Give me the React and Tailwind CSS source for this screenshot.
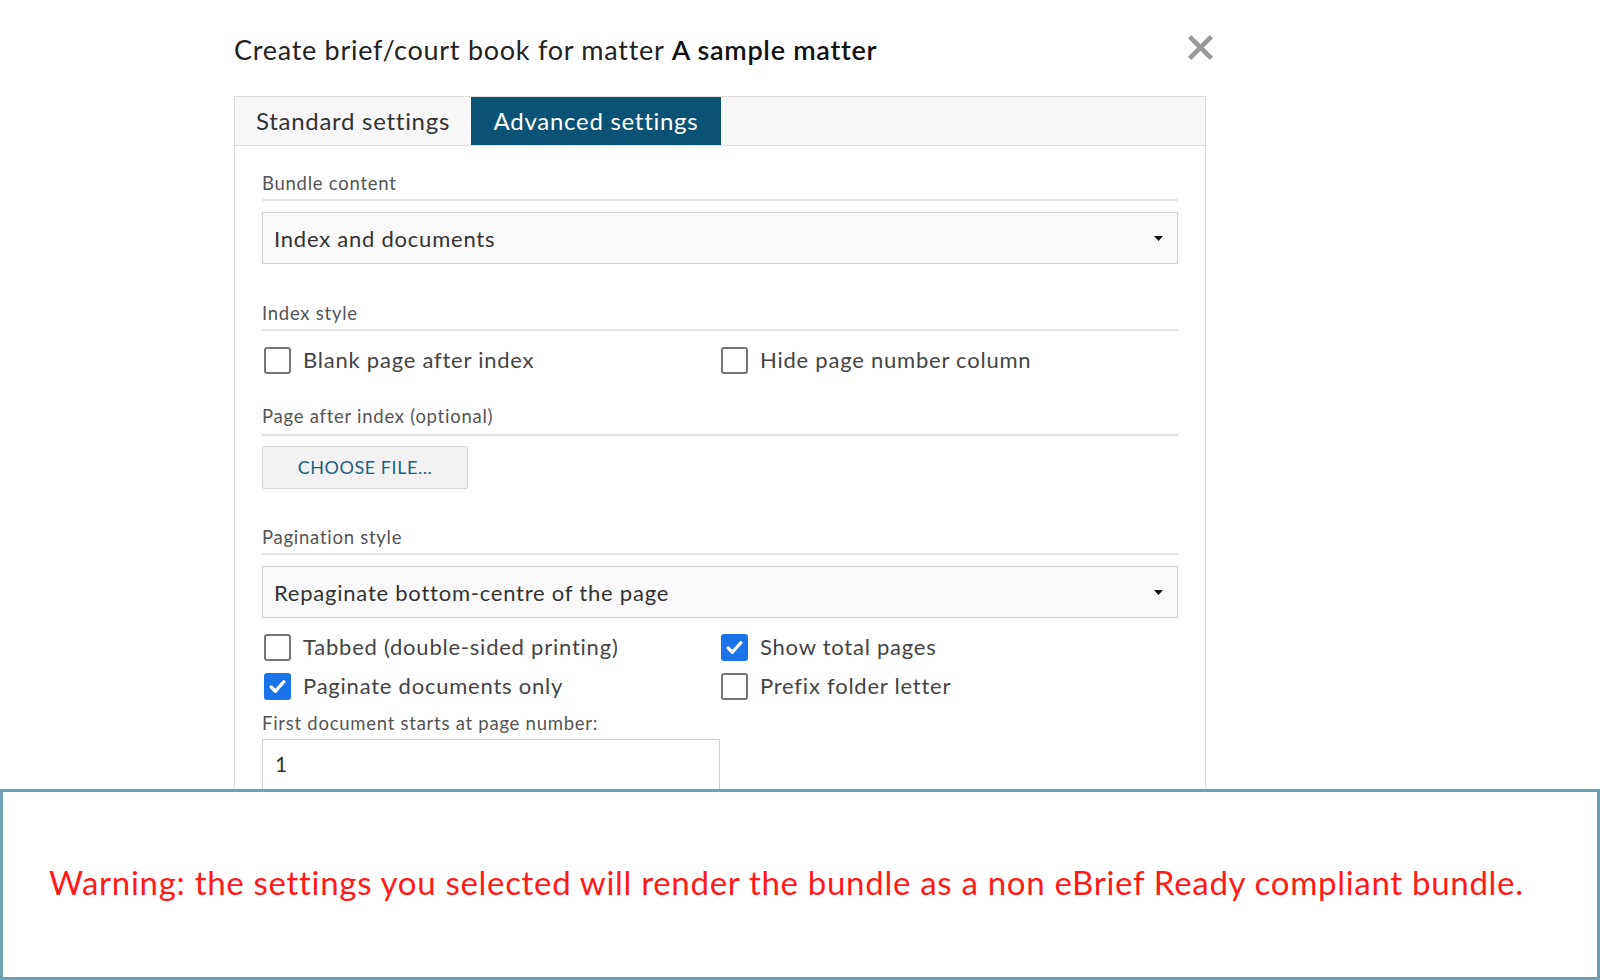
import React from "react";

const FONT = { fontFamily: "Lato, 'Noto Sans', sans-serif" };

function Checkbox({ checked, label }) {
  return (
    <label className="flex items-center h-[36px] gap-[12px] text-[22px] tracking-[0.035em] text-[#444]">
      {checked ? (
        <span className="w-[27px] h-[27px] rounded-[3px] bg-[#1a73e8] flex items-center justify-center">
          <svg width="19" height="19" viewBox="0 0 18 18">
            <path d="M3 9.5l4 4 8-9" fill="none" stroke="#fff" strokeWidth="3.2" strokeLinecap="round" strokeLinejoin="round" />
          </svg>
        </span>
      ) : (
        <span className="w-[27px] h-[27px] rounded-[3px] border-2 border-[#757575] bg-white" />
      )}
      <span className="-mt-[2px]">{label}</span>
    </label>
  );
}

function SectionLabel({ children, mt, tall }) {
  return (
    <div
      className={
        (tall ? "h-[32px] " : "h-[30px] ") +
        mt +
        " leading-[24px] text-[18.5px] tracking-[0.04em] text-[#555] border-b-2 border-[#e4e4e4]"
      }
    >
      {children}
    </div>
  );
}

function Select({ value }) {
  return (
    <div className="h-[52px] bg-[#f9f9f9] border border-[#cfcfcf] flex items-center justify-between pl-[11px] pr-[14px] text-[22px] tracking-[0.035em] text-[#333]">
      <span>{value}</span>
      <svg width="9" height="5" viewBox="0 0 9 5">
        <path d="M0 0h9L4.5 5z" fill="#111" />
      </svg>
    </div>
  );
}

export default function App() {
  return (
    <div className="w-[1600px] h-[980px] bg-white flex flex-col overflow-hidden" style={FONT}>
      <div className="h-[789px] overflow-hidden pl-[234px]">
        <div className="w-[980px] flex items-center justify-between pt-[30px] h-[96px] pb-[26px]">
          <h1 className="text-[27px] tracking-[0.027em] leading-[40px] text-[#222]">
            Create brief/court book for matter <span className="font-semibold text-[#111]">A sample matter</span>
          </h1>
          <svg width="27" height="27" viewBox="0 0 26 26" className="mt-[-6px]">
            <path d="M2.5 2.5l21 21M23.5 2.5l-21 21" stroke="#999" strokeWidth="4.5" />
          </svg>
        </div>

        <div className="w-[972px] border border-b-0 border-[#dcdcdc] h-[700px]">
          <div className="h-[49px] bg-[#f7f7f7] border-b border-[#dcdcdc] flex">
            <div className="w-[236px] flex items-center justify-center text-[24px] tracking-[0.03em] text-[#333]">Standard settings</div>
            <div className="w-[250px] flex items-center justify-center text-[24px] tracking-[0.03em] text-white bg-[#0b5374]">Advanced settings</div>
          </div>

          <div className="px-[27px]">
            <SectionLabel mt="mt-[25px]">Bundle content</SectionLabel>
            <div className="mt-[11px]">
              <Select value="Index and documents" />
            </div>

            <SectionLabel mt="mt-[37px]">Index style</SectionLabel>
            <div className="grid grid-cols-2 mt-[11px] pl-[2px]">
              <Checkbox label="Blank page after index" />
              <Checkbox label="Hide page number column" />
            </div>

            <SectionLabel mt="mt-[26px]" tall>Page after index (optional)</SectionLabel>
            <button className="mt-[10px] w-[206px] h-[43px] bg-[#f2f2f2] border border-[#d6d6d6] rounded-[2px] text-[18px] tracking-[0.03em] text-[#1d5f7e]">
              CHOOSE FILE...
            </button>

            <SectionLabel mt="mt-[36px]">Pagination style</SectionLabel>
            <div className="mt-[11px]">
              <Select value="Repaginate bottom-centre of the page" />
            </div>

            <div className="grid grid-cols-2 gap-y-[3px] mt-[11px] pl-[2px]">
              <Checkbox label="Tabbed (double-sided printing)" />
              <Checkbox checked label="Show total pages" />
              <Checkbox checked label="Paginate documents only" />
              <Checkbox label="Prefix folder letter" />
            </div>

            <div className="mt-[7px] h-[24px] leading-[24px] text-[18.5px] tracking-[0.04em] text-[#555]">First document starts at page number:</div>
            <div className="mt-[4px] w-[458px] h-[56px] border border-[#cfcfcf] pl-[12px] pt-[8px] text-[21px] text-[#333]">1</div>
          </div>
        </div>
      </div>

      <div className="flex-1 border-[3px] border-[#6aa1b6] flex items-center pl-[46px] pb-[4px]">
        <p className="text-[33px] tracking-[0.7px] text-[#ff1a1a]">
          Warning: the settings you selected will render the bundle as a non eBrief Ready compliant bundle.
        </p>
      </div>
    </div>
  );
}
